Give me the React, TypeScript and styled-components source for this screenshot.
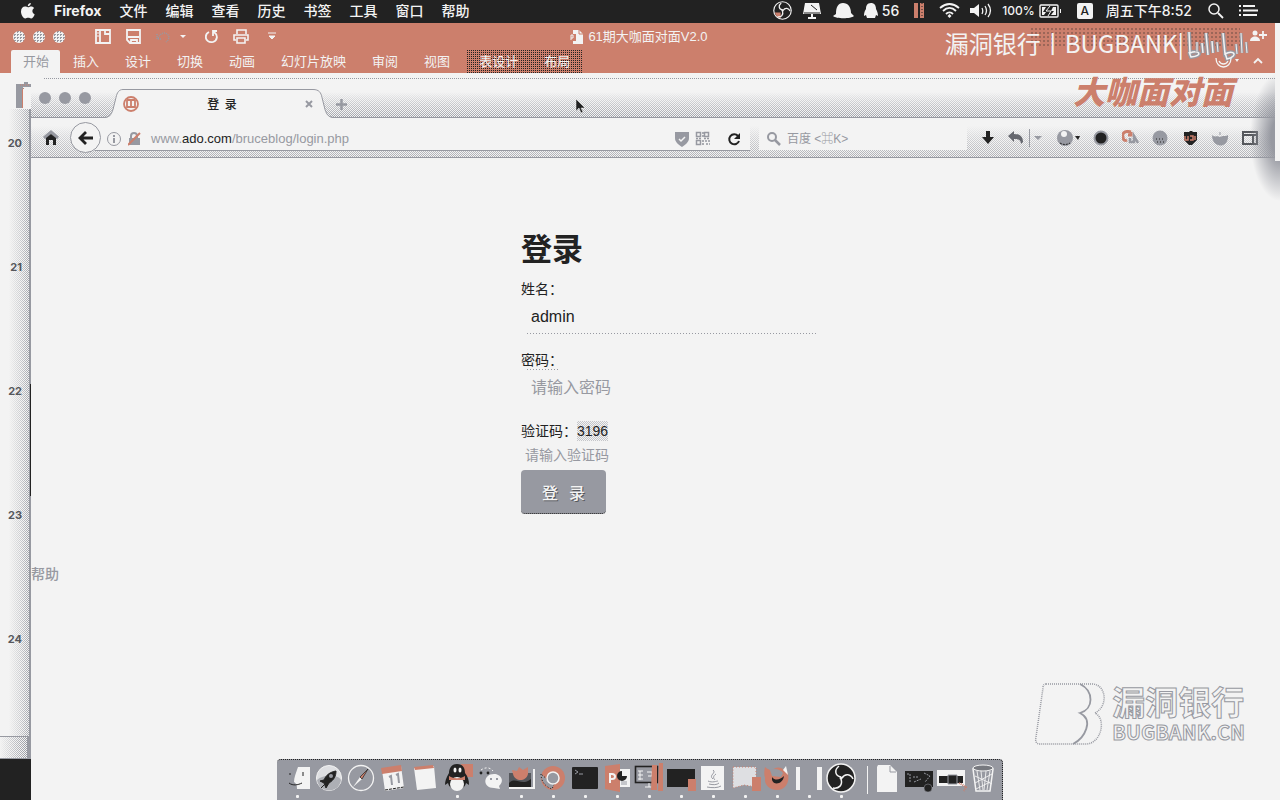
import React from 'react';
import styled, { createGlobalStyle, css } from 'styled-components';

const ink = '#222222';
const paper = '#f3f3f3';
const coral = '#cc7f6c';
const slate = '#9799a1';
const cjk = '"Noto Sans CJK SC", sans-serif';

const checker = `repeating-conic-gradient(${slate} 0 25%, ${paper} 0 50%) 0 0 / 2px 2px`;

const Global = createGlobalStyle`
  * { box-sizing: border-box; }
  body { margin: 0; background: ${paper}; color: ${ink}; font: 14px/20px "Liberation Sans", ${cjk}; }
  button, input { font: inherit; color: inherit; background: none; border: 0; padding: 0; margin: 0; outline: 0; }
  button { white-space: nowrap; }
  svg { display: block; flex: none; }
`;

const Screen = styled.div`
  position: relative;
  min-height: 100vh;
  display: flex;
  flex-direction: column;
  overflow: hidden;
`;

/* System menu bar */
const MenuBar = styled.header`
  height: 23px;
  flex: none;
  display: flex;
  align-items: center;
  justify-content: space-between;
  padding: 0 22px 2px 20px;
  background: ${ink};
  color: ${paper};
  font: 500 14px/22px Inter, ${cjk};
`;
const MenuList = styled.nav`
  display: flex;
  align-items: center;
  gap: 18px;
`;
const MenuItem = styled.button<{ $strong?: boolean }>`
  font-weight: ${p => (p.$strong ? 700 : 500)};
`;
const StatusList = styled.div`
  display: flex;
  align-items: center;
  gap: 10px;
  white-space: nowrap;
`;
const StatusGroup = styled.span<{ $small?: boolean }>`
  display: flex;
  align-items: center;
  gap: 4px;
  font-size: ${p => (p.$small ? '12px' : '14px')};
`;
const InputSource = styled.span`
  width: 16px;
  height: 16px;
  margin: 0 3px 0 5px;
  border-radius: 2px;
  background: ${paper};
  color: ${ink};
  font-size: 12px;
  line-height: 16px;
  text-align: center;
`;

/* Presentation window */
const Ribbon = styled.section`
  height: 50px;
  flex: none;
  margin-right: 5px;
  background: ${coral};
  color: ${paper};
  font-size: 13px;
`;
const TitleRow = styled.div`
  height: 27px;
  display: grid;
  grid-template-columns: 1fr auto 1fr;
  align-items: center;
  padding: 0 10px 0 13px;
`;
const QuickTools = styled.div`
  display: flex;
  align-items: center;
  gap: 15px;
`;
const Lights = styled.div<{ $solid?: boolean }>`
  display: flex;
  gap: 8px;
  margin-right: ${p => (p.$solid ? '0' : '15px')};
  span {
    width: 12px;
    height: 12px;
    border-radius: 50%;
    background: ${p => (p.$solid ? slate : `repeating-conic-gradient(${slate} 0 25%, ${paper} 0 100%) 0 0 / 3px 3px`)};
  }
`;
const DocTitle = styled.div`
  display: flex;
  align-items: center;
  gap: 4px;
  white-space: nowrap;
`;
const RibbonTabs = styled.nav`
  height: 23px;
  display: flex;
  padding-left: 11px;
`;
const RibbonTab = styled.button<{ $active?: boolean }>`
  height: 23px;
  padding: 0 13px;
  line-height: 22px;
  ${p =>
    p.$active &&
    css`
      padding: 0 11px 0 12px;
      background: ${paper};
      color: ${slate};
      border-radius: 2px 2px 0 0;
    `}
`;
const ContextTabs = styled.div`
  display: flex;
  height: 23px;
  margin-left: 3px;
  background: repeating-conic-gradient(${ink} 0 25%, ${coral} 0 100%) 0 0 / 2px 2px;
`;

/* Desktop body: ruler and browser side by side */
const Desktop = styled.main`
  flex: 1;
  display: flex;
`;
const Ruler = styled.aside`
  width: 31px;
  flex: none;
  display: flex;
  flex-direction: column;
  background: ${ink};
`;
const Clipboard = styled.div`
  height: 36px;
  padding: 7px 0 0 15px;
  background: ${paper};
`;
const RulerScale = styled.div`
  flex: 1;
  display: flex;
  flex-direction: column;
  gap: 104px;
  padding: 24px 9px 0 0;
  overflow: hidden;
  text-align: right;
  font: bold 11px/20px Inter, sans-serif;
  color: #55575c;
  background:
    linear-gradient(${ink}, ${ink}) 30px 275px / 1px 112px no-repeat,
    linear-gradient(${slate}, ${slate}) 29px 0 / 2px 100% no-repeat,
    linear-gradient(90deg, ${paper} 9px, rgba(243, 243, 243, 0.6) 20px, rgba(243, 243, 243, 0) 100%),
    ${checker};
`;
const RulerFoot = styled.div`
  height: 23px;
  margin-bottom: 41px;
  border: solid ${slate};
  border-width: 1px 4px 1px 0;
  background: linear-gradient(90deg, ${paper}, transparent), ${checker};
`;

const Browser = styled.section`
  flex: 1;
  min-width: 0;
  display: flex;
  flex-direction: column;
`;
const WindowGap = styled.div`
  height: 16px;
  padding: 5px 5px 0 13px;
  &::before {
    content: '';
    display: block;
    height: 1px;
    background: repeating-linear-gradient(90deg, ${slate} 0 1px, ${paper} 0 2px);
  }
`;
const TabStrip = styled.div`
  height: 29px;
  margin-right: 5px;
  display: flex;
  align-items: flex-end;
  border-bottom: 1px solid ${slate};
  padding-left: 8px;
  background: linear-gradient(${paper} 3px, rgba(243, 243, 243, 0.7) 10px, rgba(243, 243, 243, 0.1)), ${checker};
  ${Lights} { align-self: center; margin-bottom: 10px; }
`;
const Tab = styled.div`
  display: flex;
  height: 29px;
  margin: 0 0 -1px 12px;
`;
const TabBody = styled.div`
  width: 190px;
  display: flex;
  align-items: center;
  justify-content: space-between;
  border-top: 1px solid ${slate};
  background: ${paper};
  font: 500 12px/20px ${cjk};
  white-space: pre;
`;
const NewTab = styled.button`
  margin: 0 0 7px 1px;
`;
const NavBar = styled.div`
  height: 40px;
  margin-right: 5px;
  display: flex;
  align-items: center;
  padding: 0 16px 0 12px;
  border-bottom: 1px solid ${slate};
  background: linear-gradient(${paper} 8px, rgba(243, 243, 243, 0.65) 20px, rgba(243, 243, 243, 0.25)), ${checker};
`;
const BackButton = styled.button`
  width: 31px;
  height: 31px;
  margin-left: 11px;
  flex: none;
  display: grid;
  place-items: center;
  border: 1px solid ${slate};
  border-radius: 50%;
  background: ${paper};
  z-index: 1;
`;
const AddressBar = styled.div`
  flex: 1;
  height: 33px;
  margin: 0 9px 6px -6px;
  padding: 9px 6px 0 12px;
  display: flex;
  align-items: center;
  gap: 5px;
  background: ${paper};
  border-bottom: 1px solid ${slate};
`;
const Address = styled.a`
  flex: 1;
  margin-left: 5px;
  font-size: 13px;
  text-decoration: none;
  color: ${slate};
  b { font-weight: 400; color: ${ink}; }
`;
const SearchBox = styled.label`
  width: 208px;
  height: 32px;
  margin-bottom: 7px;
  padding: 9px 0 0 8px;
  display: flex;
  align-items: center;
  gap: 6px;
  background: ${paper};
  input { width: 160px; font-size: 12px; }
  input::placeholder { color: ${slate}; opacity: 1; }
`;
const Addons = styled.div`
  display: flex;
  align-items: center;
  justify-content: space-between;
  width: 278px;
  margin-left: 14px;
`;
const AddonButton = styled.button`
  display: flex;
  align-items: center;
  gap: 3px;
`;

/* Login page */
const Page = styled.div`
  position: relative;
  flex: 1;
  padding: 71px 0 0 31px;
`;
const Form = styled.form`
  width: 300px;
  margin: 0 auto;
`;
const Heading = styled.h1`
  margin: 0 0 14px;
  font: bold 31px/36px ${cjk};
`;
const Field = styled.div`
  margin-bottom: 16px;
`;
const Label = styled.label<{ $dotted?: boolean }>`
  display: block;
  height: 20px;
  font: 14px/20px "Liberation Sans", ${cjk};
  ${p =>
    p.$dotted &&
    css`
      background: repeating-linear-gradient(90deg, ${slate} 0 1px, ${paper} 0 3px) 6px 19px / 32px 1px no-repeat;
    `}
`;
const TextBox = styled.input<{ $lined?: boolean }>`
  display: block;
  width: 290px;
  height: 35px;
  margin-left: 6px;
  padding-left: 4px;
  font-size: 16px;
  background: ${p => (p.$lined ? `repeating-linear-gradient(90deg, ${slate} 0 1px, ${paper} 0 3px) 0 34px / 290px 1px no-repeat` : 'none')};
  &::placeholder { color: ${slate}; opacity: 1; }
`;
const CodeBox = styled.input`
  display: block;
  width: 200px;
  height: 29px;
  padding-left: 4px;
  padding-bottom: 2px;
  &::placeholder { color: ${slate}; opacity: 1; }
`;
const Captcha = styled.span`
  display: inline-block;
  background: linear-gradient(rgba(243, 243, 243, 0.5), rgba(243, 243, 243, 0.5)), ${checker};
`;
const Submit = styled.button`
  width: 85px;
  height: 44px;
  border-radius: 4px;
  border-bottom: 1px dotted ${ink};
  background: ${slate};
  color: ${paper};
  font: 500 16px/40px ${cjk};
  text-shadow: 1px 1px 0 #55575c;
  white-space: pre;
`;
const HelpLink = styled.a`
  position: absolute;
  left: 0;
  top: 406px;
  color: ${slate};
  font-weight: 500;
  text-decoration: none;
`;

/* Overlays */
const EdgeShade = styled.div`
  position: absolute;
  top: 73px;
  right: 0;
  width: 30px;
  height: 128px;
  clip-path: polygon(0 0, 25px 0, 25px 88px, 100% 88px, 100% 100%, 0 100%);
  background: radial-gradient(ellipse 30px 64px at 100% 50%, ${slate} 30%, rgba(151, 153, 161, 0) 100%);
`;
const StreamTitle = styled.div`
  position: absolute;
  top: 25px;
  right: 96px;
  display: flex;
  align-items: center;
  font: 24px/36px ${cjk};
  color: ${paper};
`;
const StreamShade = styled.div`
  position: absolute;
  top: 27px;
  right: 40px;
  width: 210px;
  height: 19px;
  background: radial-gradient(circle, #55403b 0 1px, transparent 1px) 0 0 / 4px 4px;
  opacity: 0.4;
`;
const StreamLogo = styled.div`
  position: absolute;
  top: 30px;
  right: 8px;
`;
const ShowName = styled.div`
  position: absolute;
  top: 71px;
  right: 47px;
  font: italic 900 32px/38px ${cjk};
  color: ${coral};
`;
const Watermark = styled.div`
  position: absolute;
  right: 35px;
  bottom: 54px;
  display: flex;
  gap: 7px;
  color: ${paper};
  -webkit-text-stroke: 1px ${slate};
`;
const WatermarkName = styled.div`
  font: bold 33px/38px ${cjk};
`;
const WatermarkSite = styled.div`
  font: bold 20px/24px ${cjk};
`;
const Pointer = styled.div`
  position: absolute;
  left: 575px;
  top: 98px;
`;
const Dock = styled.nav`
  position: absolute;
  left: 50%;
  bottom: 0;
  transform: translateX(-50%);
  height: 41px;
  padding: 2px 3px 0 4px;
  display: flex;
  background: ${slate};
  border-top: 1px dotted ${ink};
  border-right: 1px dotted ${ink};
  border-radius: 4px 4px 0 0;
`;
const DockItem = styled.button<{ $open?: boolean }>`
  width: 32px;
  height: 37px;
  flex: none;
  display: flex;
  flex-direction: column;
  align-items: center;
  &::after {
    content: '';
    width: 3px;
    height: 3px;
    margin-top: 1px;
    border-radius: 1px;
    background: ${p => (p.$open ? paper : 'transparent')};
  }
`;
const DockRule = styled.span`
  width: 14px;
  height: 32px;
  background: linear-gradient(${paper}, ${paper}) 10px 4px / 1px 28px no-repeat;
`;

type IconProps = { w: number; h: number; children: React.ReactNode };
const Icon = ({ w, h, children }: IconProps) => (
  <svg width={w} height={h} viewBox={`0 0 ${w} ${h}`} fill="none" aria-hidden="true">
    {children}
  </svg>
);

const Aperture = ({ size }: { size: number }) => (
  <svg width={size} height={size} viewBox="0 0 30 30" fill="none" aria-hidden="true">
    <circle cx="15" cy="15" r="13.8" fill={ink} stroke={paper} strokeWidth="1.8" />
    <path d="M3 18h9v9C7 26 4 23 3 18Z" fill={coral} />
    <path d="M15 14C9 13 8 7 13 3M16 15c3-5 9-4 11 1M15 16c2 6-2 10-8 9" stroke={paper} strokeWidth="2" />
    <circle cx="15" cy="15" r="1.8" fill={paper} />
  </svg>
);

const dockIcons: { name: string; open?: boolean; art: React.ReactNode }[] = [
  { name: 'Finder', open: true, art: <><path d="M17 5h12v22H16c0-4-1-6-3-7 0-5 2-9 4-15Z" fill={paper} /><path d="M8 21c4 3 9 2 13 0M9 11v2M22 10v4" stroke={ink} /></> },
  { name: 'Launchpad', open: false, art: <><circle cx="16" cy="16" r="12.5" fill="#dedfe2" stroke={paper} /><path d="M4 18c2 14 22 14 24 0-3-6-18-6-24 0Z" fill="#adafb5" /><path d="M23 9c-6 1-10 4-12 9l-4 1 4 2 2 5 3-5c5-3 7-7 7-12ZM8 26l4-4" fill={ink} stroke={ink} /><circle cx="18" cy="14" r="2" fill={slate} /></> },
  { name: 'Safari', art: <><circle cx="16" cy="16" r="12.5" stroke={paper} strokeWidth="1.3" /><path d="m8 25 7-10 2 2Z" fill={paper} /><path d="m15 15 8-8-6 10Z" fill={coral} stroke={ink} strokeWidth=".7" /></> },
  { name: 'Calendar', art: <><path d="m5 8 19-4 3 22-19 3Z" fill={paper} /><path d="m4 6 20-3 1 6-20 3Z" fill={coral} /><path d="m12 15 2-1 1 9m4-10 2-1 1 9" stroke={slate} strokeWidth="2" /><path d="m8 28 19-3" stroke={ink} strokeDasharray="3 1" /></> },
  { name: 'Notes', art: <><path d="m5 6 20-2 2 22-19 2Z" fill={paper} /><path d="m5 5 19-2 1 3L6 8Z" fill={coral} /></> },
  { name: 'QQ', open: true, art: <><path d="M20 2h12v13H22Z" fill={coral} /><path d="M16 2c-6 0-8 5-8 9-3 5-4 8-4 12l3-2c2 9 16 9 18 0l3 2c0-5-1-8-4-12 0-5-2-9-8-9Z" fill={ink} /><ellipse cx="16" cy="22" rx="7" ry="7" fill={paper} /><path d="M8 14c5 3 11 3 16 0v4H8Z" fill={coral} /><ellipse cx="14" cy="8" rx="1.5" ry="2.5" fill={paper} /><ellipse cx="19" cy="8" rx="1.5" ry="2.5" fill={paper} /></> },
  { name: 'WeChat', art: <><path d="M8 8c4-3 9-3 12 1" stroke={paper} strokeDasharray="2 2" /><circle cx="8" cy="11" r="1.4" fill={ink} /><circle cx="15" cy="11" r="1.4" fill={ink} /><path d="M21 12c-11 0-12 14 0 14l6 1-1-3c6-5 2-12-5-12Z" fill={paper} /><path d="M17 17h2m4 0h2" stroke={slate} strokeWidth="2" /></> },
  { name: 'Player', open: true, art: <><path d="M4 11h22v14H4Z" fill="#55575c" /><path d="M4 26h25V7" stroke={paper} strokeWidth="2" /><path d="m7 8 5 1 2-4 4 3 5-3v7c-2 8-13 8-15 0Z" fill={coral} /><path d="M4 21c7-7 12 4 22-4v8H4Z" fill={ink} /></> },
  { name: 'Chrome', open: true, art: <><circle cx="16" cy="16" r="12" fill={coral} /><path d="M4 12c0 8 5 13 11 15l3-7-6-1Z" fill={slate} stroke={ink} strokeDasharray="1 2" /><circle cx="16" cy="16" r="6" fill={slate} stroke={paper} strokeWidth="1.5" /></> },
  { name: 'Terminal', open: true, art: <><rect x="3" y="5" width="26" height="22" rx="1" fill={ink} /><path d="m6 8 3 2-3 2m4 0h4" stroke={slate} /></> },
  { name: 'PowerPoint', open: true, art: <><path d="M15 7h14v18H15Z" fill={paper} /><path d="M4 4l15-2v28L4 27Z" fill={coral} /><path d="M9 21v-9h2c4 0 4 5 0 5H9" stroke={paper} strokeWidth="2" /><path d="M21 9a5 5 0 1 0 5 5h-5Z" fill={ink} /><path d="M20 20h6m-6 2h6" stroke={slate} /></> },
  { name: 'Display', open: true, art: <><rect x="2.500" y="4.500" width="22" height="16" stroke={ink} strokeWidth="1.600" /><path d="M5 9h5M5 13h5M5 17h5M7 9v9M14 10h5v4h-4m-3 11h10m-6-4v4" stroke={paper} /><path d="M19 3h5v25h-6Zm7-2h4v28h-5Z" fill={coral} /></> },
  { name: 'Console', open: true, art: <><path d="M2 7h28v18H2Z" fill={ink} /><path d="M23 17h8v12h-8Z" fill={coral} /></> },
  { name: 'Java', open: true, art: <><path d="M4 4h23v24H4Z" fill={paper} /><path d="M16 8c4 3-5 5 0 9m3-5c-3 2-3 4-1 6m-7 1c4 2 9 0 10 0m-9 3c4 1 8 1 10-1m-12 4c5 1 11 1 14-1" stroke={slate} /></> },
  { name: 'Folder', open: true, art: <><path d="M4 5h23v20l-12-2-11 3Z" fill="#dedfe2" stroke={coral} strokeDasharray="1 2" /><path d="M23 15h9v14h-9Z" fill={coral} /></> },
  { name: 'Firefox', open: true, art: <><path d="M4 5c2 2 4 2 6 4 4-4 9-5 13-1l4 3c2 10-3 17-11 17S3 22 4 16c-1-3-1-7 0-11Z" fill={coral} /><path d="M9 8c4-2 10-1 13 3l-2 4-9-1Z" fill={slate} /><path d="M11 15c3 4 8 3 12-1-1 8-10 10-12 4Z" fill={ink} /><path d="m25 4 2 9-5-5Z" fill={paper} /></> },
  { name: 'Reader', open: true, art: <path d="M3 5h4v23H3Zm21 0h5v23h-5Z" fill={paper} /> },
  { name: 'OBS', open: true, art: <g transform="translate(1 1)"><circle cx="15" cy="15" r="14" fill={ink} stroke={paper} strokeWidth="1.500" /><path d="M15 14C9 13 8 7 13 3M16 15c3-5 9-4 11 1M15 16c2 6-2 10-8 9" stroke={paper} strokeWidth="1.500" /><circle cx="15" cy="15" r="1.500" fill={paper} /></g> },
];
const dockFiles: { name: string; art: React.ReactNode }[] = [
  { name: 'Document', art: <><path d="M7 3h12l7 7v20H6V5Z" fill={paper} /><path d="M19 4v6h6" stroke={slate} /></> },
  { name: 'Recording', art: <><path d="M2 9h28v16H2Z" fill={ink} /><path d="M4 12h3v9m3-6h6m-5 5 7-3m3-6 6 3-5 6" stroke={slate} strokeDasharray="2 1" /><circle cx="25" cy="26" r="4" fill={ink} stroke={slate} strokeWidth=".5" /></> },
  { name: 'Capture', art: <><path d="M2 8h28v16H2Z" fill={paper} /><path d="M4 14h24v7H4Z" fill={ink} /><path d="M13 13h9v9h-9Z" fill={ink} stroke={slate} /><path d="m24 21 7 4-2 4" stroke={coral} strokeWidth="2" strokeDasharray="1 1" /></> },
  { name: 'Trash', art: <><path d="m6 7 3 22h14l3-22Z" fill={slate} stroke={paper} strokeWidth="1.500" /><path d="m10 9 3 19m1-19 2 19m3-19-2 19m6-19-3 19M8 14l17 8M8 21l17-9M9 27l14-7" stroke={paper} strokeWidth=".9" /><ellipse cx="16" cy="6" rx="10" ry="3" fill="#77797f" stroke={paper} /></> },
];

const menus = ['文件', '编辑', '查看', '历史', '书签', '工具', '窗口', '帮助'];
const ribbon = ['插入', '设计', '切换', '动画', '幻灯片放映', '审阅', '视图'];
const marks = ['20', '21', '22', '23', '24'];
const bilibili = 'M15 7l1 21c9-4 14 3 1 4l-2-5M28 18l1 10M32 8l2 22M38 16l1 12M49 8l2 21c9-5 14 2 2 5l-2-6';
const bilibiliEnd = 'M23 17v10M43 17l1 10M62 19l1 10M67 8l1 20M72 17l1 11';

export default function App() {
  return (
    <Screen>
      <Global />
      <MenuBar>
        <MenuList>
          <MenuItem aria-label="Apple">
            <svg width="16" height="18" viewBox="0 0 16 18" aria-hidden="true">
              <path fill={paper} d="M10.800 1c.2 1.700-1.300 3.300-3 3.300C7.600 2.700 9.200 1.100 10.800 1ZM8 5.300c.8 0 1.800-.8 3.200-.8 1.200 0 2.300.6 3 1.600-2.700 1.600-2.200 5.200.5 6.300-.8 2-2.200 4-3.600 4-1.200 0-1.500-.7-2.900-.7s-1.800.7-2.900.7C3 16.400 1 12.600 1 9.600c0-3.200 2-5 4-5 1.300 0 2.200.7 3 .7Z" />
            </svg>
          </MenuItem>
          <MenuItem $strong>Firefox</MenuItem>
          {menus.map(m => <MenuItem key={m}>{m}</MenuItem>)}
        </MenuList>
        <StatusList>
          <Aperture size={19} />
          <Icon w={20} h={17}><path d="M3 1h14l2 11H1Z" fill={paper} /><path d="m9 3 6 5M2 11h16" stroke={ink} /><path d="M10 12v3m-4 1h8" stroke={paper} strokeWidth="2" /></Icon>
          <Icon w={22} h={17}><path d="M4 12C4 5 6 1 11 1s8 4 8 10l3 3c-3 3-18 3-21 0Z" fill={paper} /></Icon>
          <StatusGroup><Icon w={14} h={17}><path d="M7 1c-4 0-5 3-5 6-2 3-2 5-2 7l2-1 1 3h8l1-3 2 1c0-3-1-5-2-7 0-4-2-6-5-6Z" fill={paper} /></Icon>56</StatusGroup>
          <Icon w={20} h={17}><path d="M5 1h4v15H5Zm6 0h4v15h-4Z" fill={coral} /><path d="M10 1v15" stroke={ink} strokeWidth="2" /><path d="M13 1v15" stroke={ink} strokeDasharray="1 2" /></Icon>
          <Icon w={21} h={17}><path d="M1 6c6-5 13-5 19 0M4 9c4-4 9-4 13 0M7 12c2-2 5-2 7 0" stroke={paper} strokeWidth="1.800" /><path d="m10.500 12 2 2-2 2-2-2Z" fill={paper} /></Icon>
          <Icon w={22} h={17}><path d="M0 6h4l5-4v13l-5-4H0Z" fill={paper} /><path d="M12 6c1 2 1 4 0 6m3-8c2 3 2 6 0 9m3-11c3 4 3 9 0 13" stroke={paper} strokeWidth="1.300" /></Icon>
          <StatusGroup $small>100%<Icon w={23} h={14}><rect x="1" y="1" width="18" height="12" rx="1" stroke={paper} strokeWidth="1.400" /><path d="M3 3h4l-3 5h3l-2 3H3Zm14 8h-5l3-4h-3l2-4h3ZM21 5h1v4h-1Z" fill={paper} /><path d="m11 2-4 5h5l-3 5" stroke={paper} /></Icon></StatusGroup>
          <InputSource>A</InputSource>
          <span>周五下午8:52</span>
          <Icon w={27} h={17}><circle cx="12" cy="7" r="5" stroke={paper} strokeWidth="1.500" /><path d="m16 11 5 5" stroke={paper} strokeWidth="1.800" /></Icon>
          <Icon w={19} h={13}><path d="M0 2h2m2 0h12M0 6.500h2m2 0h15M0 11h2m2 0h14" stroke={paper} strokeWidth="2" /></Icon>
        </StatusList>
      </MenuBar>

      <Ribbon>
        <TitleRow>
          <QuickTools>
            <Lights><span /><span /><span /></Lights>
            <Icon w={16} h={15}><path d="M1 1h14v13H1Zm4 0v13M10 1v4h5" stroke={paper} strokeWidth="1.800" /><path d="M2 4h2M2 7h2" stroke={paper} /></Icon>
            <Icon w={15} h={15}><path d="M1 1h13v13H4l-3-3ZM2 8h11M5 14v-3h6v3" stroke={paper} strokeWidth="1.800" /></Icon>
            <Icon w={34} h={15}><path d="M1 5v5h5M2 9c3-5 6-6 9-4s2 6-1 8" stroke={slate} strokeDasharray="1 1" strokeWidth="1.500" /><path d="M24 6h6l-3 3Z" fill={paper} /></Icon>
            <Icon w={13} h={15}><path d="M9 3c4 3 4 8-1 10-4 1-8-2-7-6 0-2 1-3 3-4M12 2H8v5" stroke={paper} strokeWidth="1.800" /></Icon>
            <Icon w={16} h={15}><path d="M4 5V1h9v4M3 11H1V6h14v5h-2M4 9h8v5H4Z" stroke={paper} strokeWidth="1.600" /></Icon>
            <Icon w={16} h={15}><path d="M4 4h8M5 7h6l-3 3Z" stroke={paper} fill={paper} /></Icon>
          </QuickTools>
          <DocTitle>
            <Icon w={14} h={15}><path d="M3 1h6l4 4v10H3Z" fill={paper} /><path d="M9 1v4h4" stroke={coral} /><path d="M0 5h6v7H0Z" fill={coral} /><path d="M1 11V6h2v3H1" stroke={paper} /></Icon>
            61期大咖面对面V2.0
          </DocTitle>
          <span />
        </TitleRow>
        <RibbonTabs>
          <RibbonTab $active>开始</RibbonTab>
          {ribbon.map(t => <RibbonTab key={t}>{t}</RibbonTab>)}
          <ContextTabs>
            <RibbonTab>表设计</RibbonTab>
            <RibbonTab>布局</RibbonTab>
          </ContextTabs>
        </RibbonTabs>
      </Ribbon>

      <Desktop>
        <Ruler>
          <Clipboard>
            <Icon w={16} h={29}><path d="M1 4h15v3H8v21H1Z" fill={slate} /><path d="M9 2h4v3H9Z" fill={slate} /><path d="M7.500 28V9.500L9 8" stroke={coral} /><path d="M5 5h9" stroke={coral} strokeDasharray="1 1" /></Icon>
          </Clipboard>
          <RulerScale>{marks.map(m => <span key={m}>{m}</span>)}</RulerScale>
          <RulerFoot />
        </Ruler>

        <Browser>
          <WindowGap />
          <TabStrip>
            <Lights $solid><span /><span /><span /></Lights>
            <Tab>
              <Icon w={20} h={29}><path d="M0 29c6 0 8-2 10-8l3-13c1-5 3-7.500 7-7.500V29Z" fill={paper} /><path d="M0 28.500c6 0 8-2 10-8l3-12c1-5 3-8 7-8" stroke={slate} /></Icon>
              <TabBody>
                <Icon w={16} h={16}><circle cx="8" cy="8" r="7" stroke={coral} strokeWidth="1.800" /><path d="M4 4v7h8V4M8 5v5M4 4h8" stroke={coral} strokeWidth="1.800" /></Icon>
                <span>登  录</span>
                <button aria-label="关闭标签页"><Icon w={8} h={8}><path d="m1 1 6 6m0-6L1 7" stroke={slate} strokeWidth="2" /></Icon></button>
              </TabBody>
              <Icon w={22} h={29}><path d="M22 29c-6 0-8-2-10-8L9 8C8 3 6 .5 0 .5V29Z" fill={paper} /><path d="M22 28.500c-6 0-8-2-10-8l-3-12c-1-5-3-8-9-8" stroke={slate} /></Icon>
            </Tab>
            <NewTab aria-label="新标签页"><Icon w={11} h={11}><path d="M5.500 0v11M0 5.500h11" stroke={slate} strokeWidth="2.500" /></Icon></NewTab>
          </TabStrip>
          <NavBar>
            <button aria-label="主页"><Icon w={16} h={16}><path d="m1 8 7-6 7 6" stroke={slate} strokeWidth="3" /><path d="M3 8l5-4 5 4v7h-3v-5H6v5H3Z" fill={ink} /></Icon></button>
            <BackButton aria-label="后退"><Icon w={15} h={16}><path d="M8 2 2 8l6 6M2 8h13" stroke={ink} strokeWidth="2.800" /></Icon></BackButton>
            <AddressBar>
              <Icon w={16} h={16}><circle cx="7" cy="8" r="6.500" stroke={slate} /><path d="M7 4v2m0 1v5" stroke={slate} strokeWidth="2" /></Icon>
              <Icon w={13} h={14}><path d="M3 6V4c0-4 6-4 6 0v2" stroke={slate} strokeWidth="2" /><path d="M1 6h11v7H1Z" fill={slate} /><path d="m0 13 12-12" stroke={coral} strokeWidth="2" /></Icon>
              <Address href="#login">www.<b>ado.com</b>/bruceblog/login.php</Address>
              <Icon w={16} h={16}><path d="M1 1h14v6c0 4-3 6-7 9-4-3-7-5-7-9Z" fill={slate} /><path d="m5 8 2 2 4-4" stroke={paper} strokeWidth="1.500" /></Icon>
              <Icon w={16} h={15}><path d="M1.500 1.500h4v4h-4Zm8 0h4v4h-4Zm-8 8h4v4h-4Z" stroke={slate} strokeWidth="1.500" /><path d="M8 1v5M1 7.500h5m3 0h5M8 9v5m2-4h2m1 0h2m-4 3h4" stroke={slate} strokeDasharray="2 1" strokeWidth="1.600" /></Icon>
              <button aria-label="重新载入"><Icon w={28} h={14}><path d="M23 9a5 5 0 1 1-1-5" stroke={ink} strokeWidth="2" /><path d="M24 1v6h-6Z" fill={ink} /></Icon></button>
            </AddressBar>
            <SearchBox aria-label="搜索">
              <Icon w={14} h={15}><circle cx="5" cy="6" r="4" stroke={slate} strokeWidth="2" /><path d="m8 9 5 5" stroke={slate} strokeWidth="2.500" /></Icon>
              <input placeholder="百度 <⌘K>" />
            </SearchBox>
            <Addons>
              <AddonButton aria-label="下载"><Icon w={14} h={16}><path d="M5 1h4v6h4l-6 7-6-7h4Z" fill={ink} /></Icon></AddonButton>
              <AddonButton aria-label="撤销"><Icon w={34} h={20}><path d="m0 8 6-5v3c6 0 9 3 9 8l-2 2c0-4-3-5-7-5v3Z" fill="#66686f" /><path d="M21.500 1v18" stroke={slate} /><path d="M26 8h8l-4 4Z" fill={slate} /></Icon></AddonButton>
              <AddonButton aria-label="代理"><Icon w={24} h={18}><circle cx="9" cy="9" r="8" fill={slate} /><circle cx="8" cy="5" r="3" fill={paper} /><path d="M4 14c3 2 7 2 10 0" stroke={ink} strokeDasharray="2 1" /><path d="M19 7h5l-2 4Z" fill={ink} /></Icon></AddonButton>
              <AddonButton aria-label="黑球"><Icon w={16} h={16}><circle cx="8" cy="8" r="6.500" fill={ink} stroke={slate} strokeWidth="2" /></Icon></AddonButton>
              <AddonButton aria-label="扩展"><Icon w={17} h={16}><path d="M9 2C2 0 0 4 1 7c0 3 2 4 4 3M6 5h3V2" stroke={coral} strokeWidth="3" /><path d="M8 8v4h4V6l4 7" stroke={slate} strokeWidth="2.500" /></Icon></AddonButton>
              <AddonButton aria-label="灰球"><Icon w={17} h={16}><circle cx="8" cy="8" r="7.500" fill={slate} /><path d="M4 9h8m-7 3h7" stroke={ink} strokeDasharray="1 2" /></Icon></AddonButton>
              <AddonButton aria-label="屏蔽"><Icon w={15} h={16}><path d="M1 2h5l1-1h2l1 1h4v8l-5 5H6l-5-5Z" fill={ink} /><path d="M2 6v4h3V6m2 4h3V6H7m5 0v4" stroke={coral} strokeWidth="1.500" /></Icon></AddonButton>
              <AddonButton aria-label="宠物"><Icon w={18} h={16}><path d="M1 5c3 3 5 0 8 2 3-2 5 0 8-2 1 14-16 14-16 0Z" fill={slate} /><path d="M9 2v3" stroke={slate} /></Icon></AddonButton>
              <AddonButton aria-label="侧栏"><Icon w={17} h={16}><path d="M1 2h14v12H1ZM1 5h14M11 5v9" stroke="#55575c" strokeWidth="2" /></Icon></AddonButton>
            </Addons>
          </NavBar>

          <Page>
            <Form onSubmit={e => e.preventDefault()}>
              <Heading>登录</Heading>
              <Field>
                <Label htmlFor="user">姓名：</Label>
                <TextBox id="user" $lined defaultValue="admin" />
              </Field>
              <Field>
                <Label htmlFor="pass" $dotted>密码：</Label>
                <TextBox id="pass" type="password" placeholder="请输入密码" />
              </Field>
              <Label htmlFor="code">验证码：<Captcha>3196</Captcha></Label>
              <CodeBox id="code" placeholder="请输入验证码" />
              <Submit>登   录</Submit>
            </Form>
            <HelpLink href="#help">帮助</HelpLink>
          </Page>
        </Browser>
      </Desktop>

      <EdgeShade />
      <StreamShade />
      <StreamTitle>漏洞银行丨BUGBANK|</StreamTitle>
      <StreamLogo>
        <svg width="88" height="42" viewBox="0 0 88 42" fill="none" aria-hidden="true">
          <g transform="translate(-10 -5)">
            <path d={bilibili} stroke={slate} strokeWidth="4" />
            <path d={bilibili} stroke={paper} strokeWidth="1.500" />
            <path d={bilibiliEnd} stroke={slate} strokeWidth="3" />
            <path d={bilibiliEnd} stroke={paper} />
          </g>
          <path d="M32 28c0 12 15 12 15 0M35 31c2 4 7 4 9 0" stroke={paper} strokeWidth="1.300" />
          <path d="M51 29h4l-2 3Z" fill={paper} />
          <path d="m70 33 4-4 4 4M75 5h8M79 1v8" stroke={paper} strokeWidth="1.800" />
          <circle cx="71" cy="3" r="2.500" fill={paper} />
          <path d="M66 11c0-6 10-6 10 0Z" fill={paper} />
        </svg>
      </StreamLogo>
      <ShowName>大咖面对面</ShowName>
      <Pointer>
        <Icon w={10} h={16}><path d="M1 1v12l3-3 2 5 2-1-2-4h4Z" fill={ink} stroke={paper} strokeWidth=".5" /></Icon>
      </Pointer>
      <Watermark>
        <Icon w={71} h={64}>
          <path d="M12 2h46c14 0 17 22 3 29 12 6 6 31-9 31H6c-4 0-5-3-4-7L9 6c0-3 1-4 3-4Z" stroke={slate} strokeDasharray="1 1" strokeWidth="1.500" />
          <path d="M46 2c14 7 14 25 0 29 14 7 5 25-7 31" stroke={slate} strokeWidth="1.800" />
        </Icon>
        <div>
          <WatermarkName>漏洞银行</WatermarkName>
          <WatermarkSite>BUGBANK.CN</WatermarkSite>
        </div>
      </Watermark>
      <Dock>
        {dockIcons.map(d => <DockItem key={d.name} $open={d.open} aria-label={d.name}><Icon w={32} h={32}>{d.art}</Icon></DockItem>)}
        <DockRule />
        {dockFiles.map(d => <DockItem key={d.name} aria-label={d.name}><Icon w={32} h={32}>{d.art}</Icon></DockItem>)}
      </Dock>
    </Screen>
  );
}
